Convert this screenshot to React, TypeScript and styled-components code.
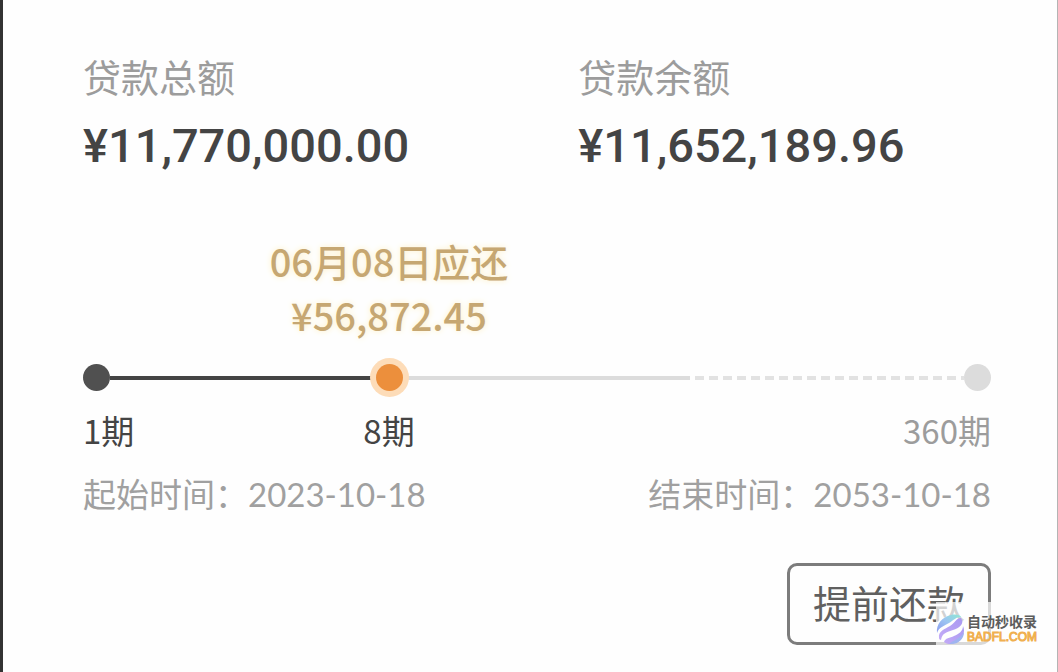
import React from "react";
import styled, { createGlobalStyle } from "styled-components";

const GlobalStyle = createGlobalStyle`
  * { box-sizing: border-box; }
  body {
    margin: 0;
    background: #fefefe;
    font-family: "Noto Sans CJK SC", "Noto Sans", sans-serif;
  }
`;

const Page = styled.main`
  position: relative;
  min-height: 100vh;
  padding: 48px 66px 27px 80px;
  border-left: 3px solid #333;
  border-right: 1px solid #b4b4b4;
  background: #fefefe;
  color: #444;
`;

const Totals = styled.dl`
  display: grid;
  grid-template-columns: 6fr 5fr;
  margin: 0 0 57px;
`;

const Total = styled.div`
  display: flex;
  flex-direction: column;
  gap: 11px;
`;

const TotalLabel = styled.dt`
  font-size: 38px;
  line-height: 56px;
  color: #9c9c9c;
`;

const TotalAmount = styled.dd`
  margin: 0;
  font-family: Roboto, "Noto Sans CJK SC", sans-serif;
  font-size: 47px;
  line-height: 62px;
  font-weight: 500;
  color: #444;
`;

/* Spans twice the distance to the current node, so its centre is that node. */
const CurrentSpan = styled.div`
  width: 67.4%;
`;

const Due = styled(CurrentSpan)`
  display: flex;
  flex-direction: column;
  align-items: center;
  font-size: 38px;
  line-height: 54px;
  font-weight: 500;
  color: #c6a772;
  text-shadow: 0 0 6px #fff0c4;
  margin-bottom: 22px;
`;

const Track = styled.div`
  display: flex;
  align-items: center;
  height: 27px;
`;

const Node = styled.span<{ $color: string; $halo?: boolean }>`
  flex: none;
  width: 27px;
  height: 27px;
  border-radius: 50%;
  background: ${(p) => p.$color};
  box-shadow: ${(p) => (p.$halo ? "0 0 0 6px #fddcb8" : "none")};
  z-index: 1;
`;

const Segment = styled.span<{ $grow: number; $color: string; $dashed?: boolean }>`
  flex: ${(p) => p.$grow} 1 0;
  height: 4px;
  background: ${(p) =>
    p.$dashed
      ? `repeating-linear-gradient(90deg, transparent 0 5px, ${p.$color} 5px 14px)`
      : p.$color};
`;

const Periods = styled.div`
  display: flex;
  justify-content: space-between;
  margin-top: 15px;
  font-size: 33px;
  line-height: 48px;
`;

const Reached = styled(CurrentSpan)`
  display: grid;
  grid-template-columns: 1fr auto 1fr;
`;

const Pending = styled.span`
  color: #9c9c9c;
`;

const Dates = styled.div`
  display: flex;
  justify-content: space-between;
  margin: 15px 0 45px;
  font-size: 33px;
  line-height: 48px;
  color: #a0a0a0;
`;

const DateValue = styled.time`
  font-family: Lato, "Noto Sans CJK SC", sans-serif;
`;

const Actions = styled.div`
  display: flex;
  justify-content: flex-end;
`;

const RepayButton = styled.button`
  padding: 9px 23px 13px;
  border: 3px solid #7c7c7c;
  border-radius: 10px;
  background: transparent;
  color: #606060;
  font-family: inherit;
  font-size: 38px;
  line-height: 54px;
`;

const Watermark = styled.aside`
  position: absolute;
  right: 20px;
  bottom: 27px;
  display: flex;
  align-items: flex-end;
  gap: 2px;
  height: 43px;
  background: rgba(254, 254, 254, 0.72);
`;

const Brand = styled.div`
  font-size: 14px;
  line-height: 16px;
  font-weight: 700;
  color: #5c5c5c;
`;

const Domain = styled.div`
  font-family: "Liberation Sans", Arial, sans-serif;
  font-size: 12px;
  line-height: 16px;
  font-weight: 400;
  color: #eda540;
  -webkit-text-stroke: 1px #f0b050;
`;

const Swirl = () => (
  <svg width="29" height="31" viewBox="0 0 29 31" aria-hidden="true">
    <defs>
      <linearGradient id="cool" x1="0" y1="1" x2="1" y2="0">
        <stop offset="0" stopColor="#8b9bee" />
        <stop offset="0.5" stopColor="#9cc4f2" />
        <stop offset="1" stopColor="#8ee8d4" />
      </linearGradient>
      <linearGradient id="warm" x1="0" y1="1" x2="1" y2="0">
        <stop offset="0" stopColor="#c3aaf6" />
        <stop offset="1" stopColor="#a99af2" />
      </linearGradient>
    </defs>
    <path d="M1 19C0 10 6 3 15 1C20 0 24 1 25 3C20 3 18 6 13 9C8 12 3 13 1 19Z" fill="url(#cool)" />
    <path d="M3 24C2 17 9 15 14 12C19 9 20 4 25 4C29 10 23 14 17 16C11 18 6 19 5 26C4 26 3 25 3 24Z" fill="url(#warm)" />
    <path d="M8 28C9 24 14 24 18 22C23 20 27 17 27 12C30 18 26 26 19 29C15 31 10 30 8 28Z" fill="url(#warm)" />
    <path d="M13 30C16 27 24 25 28 18C28 25 22 31 13 30Z" fill="#9fb4f0" />
  </svg>
);

const totals = [
  { label: "贷款总额", amount: "¥11,770,000.00" },
  { label: "贷款余额", amount: "¥11,652,189.96" },
];

export default function App() {
  return (
    <>
      <GlobalStyle />
      <Page lang="zh-CN">
        <Totals>
          {totals.map((t) => (
            <Total key={t.label}>
              <TotalLabel>{t.label}</TotalLabel>
              <TotalAmount>{t.amount}</TotalAmount>
            </Total>
          ))}
        </Totals>
        <Due>
          <span>06月08日应还</span>
          <span>¥56,872.45</span>
        </Due>
        <Track>
          <Node $color="#505050" />
          <Segment $grow={266} $color="#444" />
          <Node $color="#ec8f3c" $halo />
          <Segment $grow={287} $color="#dcdcdc" />
          <Segment $grow={274} $color="#e2e2e2" $dashed />
          <Node $color="#dcdcdc" />
        </Track>
        <Periods>
          <Reached>
            <span>1期</span>
            <span>8期</span>
          </Reached>
          <Pending>360期</Pending>
        </Periods>
        <Dates>
          <span>起始时间：<DateValue>2023-10-18</DateValue></span>
          <span>结束时间：<DateValue>2053-10-18</DateValue></span>
        </Dates>
        <Actions>
          <RepayButton type="button">提前还款</RepayButton>
        </Actions>
        <Watermark>
          <Swirl />
          <div>
            <Brand>自动秒收录</Brand>
            <Domain>BADFL.COM</Domain>
          </div>
        </Watermark>
      </Page>
    </>
  );
}
